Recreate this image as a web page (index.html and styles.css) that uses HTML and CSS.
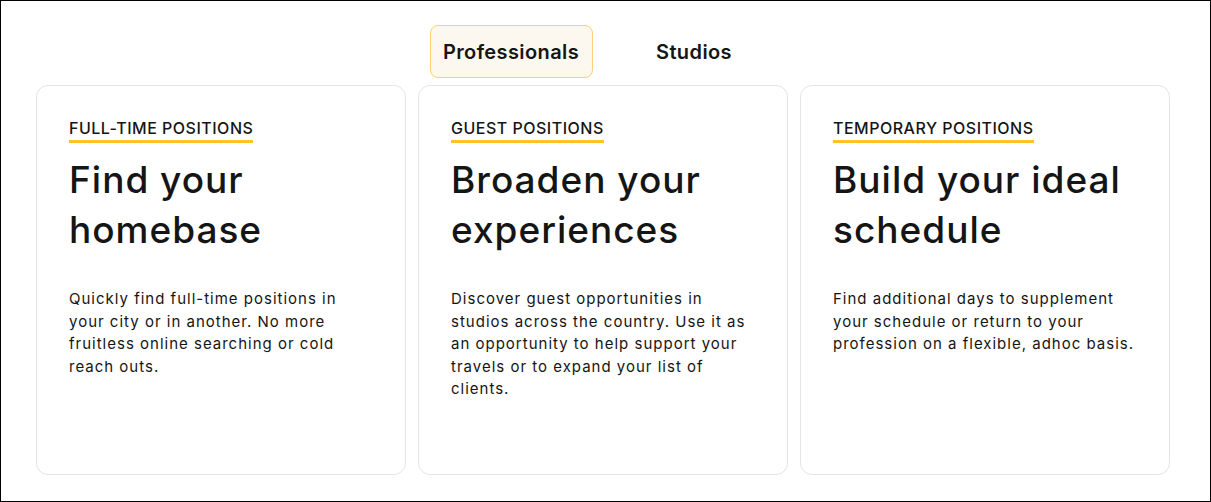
FILE: index.html
```html
<!DOCTYPE html>
<html lang="en">

<head>
    <meta charset="UTF-8">
    <meta name="viewport" content="width=device-width, initial-scale=1.0">
    <title>Positions</title>
    <link rel="stylesheet" href="styles.css">
</head>

<body>
    <div class="tabs">
        <button class="tab active">Professionals</button>
        <button class="tab">Studios</button>
    </div>

    <div class="cards">
        <div class="card">
            <span class="label">FULL-TIME POSITIONS</span>
            <h2>Find your homebase</h2>
            <p>Quickly find full-time positions in your city or in another. No more fruitless online searching or cold reach outs.</p>
        </div>
        <div class="card">
            <span class="label">GUEST POSITIONS</span>
            <h2>Broaden your experiences</h2>
            <p>Discover guest opportunities in studios across the country. Use it as an opportunity to help support your travels or to expand your list of clients.</p>
        </div>
        <div class="card">
            <span class="label">TEMPORARY POSITIONS</span>
            <h2>Build your ideal schedule</h2>
            <p>Find additional days to supplement your schedule or return to your profession on a flexible, adhoc basis.</p>
        </div>
    </div>
</body>

</html>
```

FILE: styles.css
```css
* {
    box-sizing: border-box;
}

body {
    font-family: Inter, "Liberation Sans", sans-serif;
    color: #151515;
    margin: 0;
    height: 502px;
    border: 1px solid #000;
    background-color: #fff;
}

.tabs {
    display: flex;
    justify-content: center;
    gap: 20px;
    padding-top: 24px;
    padding-right: 6px;
}

.tab {
    width: 163px;
    height: 53px;
    font-family: inherit;
    font-size: 20px;
    font-weight: 600;
    letter-spacing: 0.4px;
    color: #151515;
    background: none;
    border: 1px solid transparent;
    border-radius: 8px;
    cursor: pointer;
}

.tab.active {
    background-color: #fdf8ef;
    border-color: #fcd07a;
}

.cards {
    display: grid;
    grid-template-columns: repeat(3, 370px);
    gap: 12px;
    margin-top: 7px;
    padding-left: 35px;
}

.card {
    height: 390px;
    border: 1px solid #e4e4e4;
    border-radius: 12px;
    padding: 32px;
}

.label {
    display: inline-block;
    font-size: 16px;
    font-weight: 500;
    line-height: 20px;
    letter-spacing: 0.5px;
    padding-bottom: 2px;
    border-bottom: 3px solid #fcc521;
}

h2 {
    font-size: 37px;
    font-weight: 500;
    line-height: 50px;
    letter-spacing: 1px;
    margin: 12px 0 33px;
}

p {
    font-size: 15px;
    line-height: 22.5px;
    letter-spacing: 1px;
    margin: 0;
}
```
